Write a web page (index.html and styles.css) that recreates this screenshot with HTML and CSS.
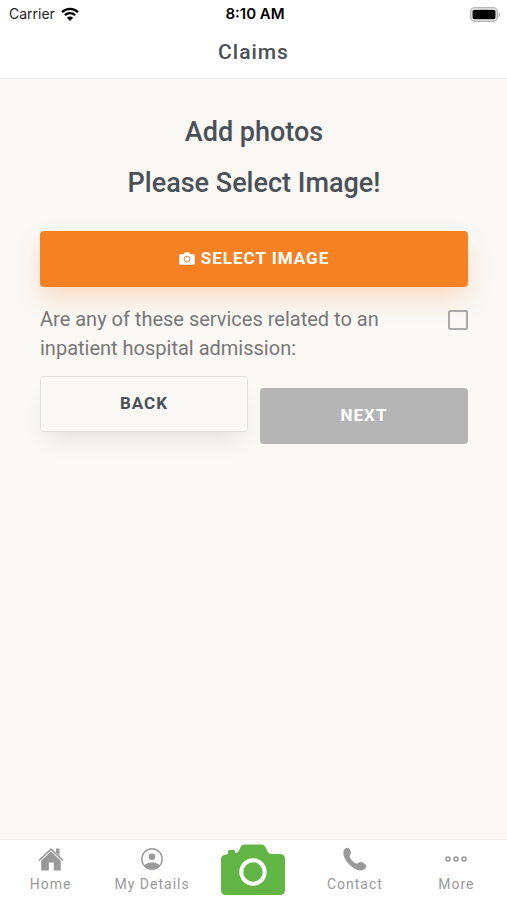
FILE: index.html
```html
<!DOCTYPE html>
<html lang="en">
<head>
<meta charset="utf-8">
<meta name="viewport" content="width=device-width, initial-scale=1">
<title>Claims</title>
<link rel="stylesheet" href="styles.css">
</head>
<body>
<header class="top">
  <div class="status">
    <span class="carrier">Carrier
      <svg class="wifi" viewBox="0 0 18 14" aria-hidden="true">
        <path d="M1 5.2a11.5 11.5 0 0 1 16 0M3.9 8.1a7.4 7.4 0 0 1 10.2 0" fill="none" stroke="#000" stroke-width="2.3"/>
        <path d="M9 14 5.9 10.7a4.4 4.4 0 0 1 6.2 0z"/>
      </svg>
    </span>
    <span class="time">8:10 AM</span>
    <svg class="battery" viewBox="0 0 31 15" aria-hidden="true">
      <rect x=".8" y=".8" width="26.4" height="13.4" rx="4" fill="#fff" stroke="#b5b5b5" stroke-width="1.5"/>
      <rect x="2.5" y="2.700" width="23" height="9.600" rx="1.8"/>
      <path d="M28.5 5.2a2.4 2.4 0 0 1 0 4.6z" fill="#b5b5b5"/>
    </svg>
  </div>
  <h1 class="title">Claims</h1>
</header>
<main class="content">
  <h2 class="heading">Add photos</h2>
  <h2 class="heading">Please Select Image!</h2>
  <button class="button primary" type="button">
    <svg class="button-icon" viewBox="0 0 16 13" aria-hidden="true">
      <path fill="#fff" d="M1.5 2.2h2.8L5.4.7Q5.7.2 6.4.2h3.2q.7 0 1 .5l1.1 1.5h2.8q1.3 0 1.3 1.3v8q0 1.3-1.3 1.3h-13Q.2 12.8.2 11.500V3.500Q.2 2.200 1.500 2.200z"/>
      <circle cx="8" cy="7.200" r="3" fill="#fff" stroke="#f58122" stroke-width="1"/>
    </svg>
    SELECT IMAGE
  </button>
  <div class="question">
    <label for="inpatient">Are any of these services related to an inpatient hospital admission:</label>
    <input id="inpatient" class="check" type="checkbox">
  </div>
  <div class="actions">
    <button class="button back" type="button">BACK</button>
    <button class="button next" type="button" disabled>NEXT</button>
  </div>
</main>
<nav class="tabs">
  <a class="tab" href="#home">
    <svg class="tab-icon" viewBox="0 0 26 26" aria-hidden="true">
      <path d="M1 14.500 13 3.200l12 11.300" fill="none" stroke="currentColor" stroke-width="1.600"/>
      <path fill="currentColor" d="M18 2.500h3.500v7.300L18 6.500zM13 5.500l9.800 9.200v9.800h-7v-8h-5v8H3.200v-9.800z"/>
    </svg>
    Home
  </a>
  <a class="tab" href="#details">
    <svg class="tab-icon" viewBox="0 0 26 26" aria-hidden="true">
      <circle cx="13" cy="13" r="10.200" fill="none" stroke="currentColor" stroke-width="1.400"/>
      <circle cx="13" cy="10.700" r="3.300" fill="currentColor"/>
      <path fill="currentColor" d="M5.700 19.200q2.300-2.600 7.300-2.600t7.300 2.600Q17.600 22.800 13 22.800t-7.300-3.600z"/>
    </svg>
    My Details
  </a>
  <a class="tab camera" href="#camera" aria-label="Camera">
    <svg class="camera-icon" viewBox="0 0 66 52" aria-hidden="true">
      <path fill="#62b544" d="M6 10.500 8 10V7.500Q8 6 9.500 6h4.200q1.500 0 1.500 1.500V9q2.500 0 3.500-2l2-4.200Q22 .5 24.500.5h17q2.500 0 3.800 2.300L47.600 7.500Q49 10 51.500 10H60q5 0 5 5v31q0 5-5 5H6q-5 0-5-5V15q0-4 5-4.500z"/>
      <circle cx="33" cy="28" r="11.700" fill="none" stroke="#fff" stroke-width="4"/>
    </svg>
  </a>
  <a class="tab" href="#contact">
    <svg class="tab-icon" viewBox="0 0 26 26" aria-hidden="true">
      <path fill="currentColor" d="M2 3.900Q4.500.8 7 2.300q2.200 2.500 1.900 5Q8.500 8.800 7.300 10q1 3 3.700 5.500 2.300 2 3.900 2.200 1.900-2 4.600-1.800 2.500.8 4.700 3.300.6 1.300-.4 2.700-2 2.300-4.800 2.500-4.500 0-9.500-4Q3 15 1.500 9 .8 6 2 3.900z"/>
    </svg>
    Contact
  </a>
  <a class="tab" href="#more">
    <svg class="tab-icon" viewBox="0 0 26 26" aria-hidden="true">
      <g fill="none" stroke="currentColor" stroke-width="1.600"><circle cx="5" cy="13" r="2"/><circle cx="13" cy="13" r="2"/><circle cx="21" cy="13" r="2"/></g>
    </svg>
    More
  </a>
</nav>
</body>
</html>
```
FILE: styles.css
```css
* { box-sizing: border-box; }

body {
  margin: 0;
  min-height: 100vh;
  display: flex;
  flex-direction: column;
  background: #f9f8f5;
  color: #4b5056;
  font-family: Roboto, sans-serif;
}

.top {
  background: #fff;
  border-bottom: 1px solid #e9e9e9;
}

.status {
  display: grid;
  grid-template-columns: 1fr auto 1fr;
  align-items: center;
  height: 28px;
  padding: 0 6px 0 9px;
  color: #222;
  font: 14px/28px Inter, sans-serif;
}

.carrier { display: flex; align-items: center; gap: 6px; }
.wifi { width: 18px; height: 14px; }
.time { color: #000; font-size: 15px; font-weight: 600; }
.battery { width: 31px; height: 15px; justify-self: end; }

.title {
  margin: 0;
  padding: 8px 0 10px;
  text-align: center;
  font-size: 21px;
  line-height: 32px;
  font-weight: 500;
  letter-spacing: 1px;
}

.content { flex: 1; padding: 37px 39px 36px 40px; }

.heading {
  margin: 0 0 19px;
  text-align: center;
  font-size: 27px;
  line-height: 32px;
  font-weight: 500;
}

.button {
  display: flex;
  align-items: center;
  justify-content: center;
  gap: 6px;
  width: 100%;
  height: 56px;
  padding: 0 0 2px;
  border: 0;
  border-radius: 4px;
  color: #fff;
  font: 700 17px/24px Roboto, sans-serif;
  letter-spacing: 1px;
}

.primary {
  margin-top: 32px;
  background: #f58122;
  box-shadow: 0 12px 24px -2px rgba(255, 128, 40, 0.26);
}

.button-icon { width: 16px; height: 13px; }

.question {
  display: flex;
  justify-content: space-between;
  align-items: flex-start;
  gap: 40px;
  margin-top: 18px;
  color: #777;
  font-size: 20px;
  line-height: 29px;
}

.check {
  appearance: none;
  flex: none;
  width: 20px;
  height: 20px;
  margin: 5px 0 0;
  border: 2px solid #aaa;
  border-radius: 2px;
}

.actions {
  display: grid;
  grid-template-columns: 1fr 1fr;
  align-items: start;
  gap: 12px;
  margin-top: 13px;
}

.back {
  border: 1px solid #dededc;
  background: #f9f8f5;
  color: #4b5056;
  box-shadow: 0 14px 24px -8px rgba(0, 0, 0, 0.1);
}

.next { margin-top: 12px; background: #b5b5b5; }

.tabs {
  display: grid;
  grid-template-columns: repeat(5, 1fr);
  height: 61px;
  border-top: 1px solid #eee;
  background: #fff;
}

.tab {
  display: flex;
  flex-direction: column;
  align-items: center;
  padding-top: 6px;
  color: #999;
  font-size: 14px;
  line-height: 24px;
  letter-spacing: 1px;
  white-space: nowrap;
  text-decoration: none;
}

.tab-icon { width: 26px; height: 26px; }
.camera { padding-top: 4px; }
.camera-icon { width: 66px; height: 52px; }
```
